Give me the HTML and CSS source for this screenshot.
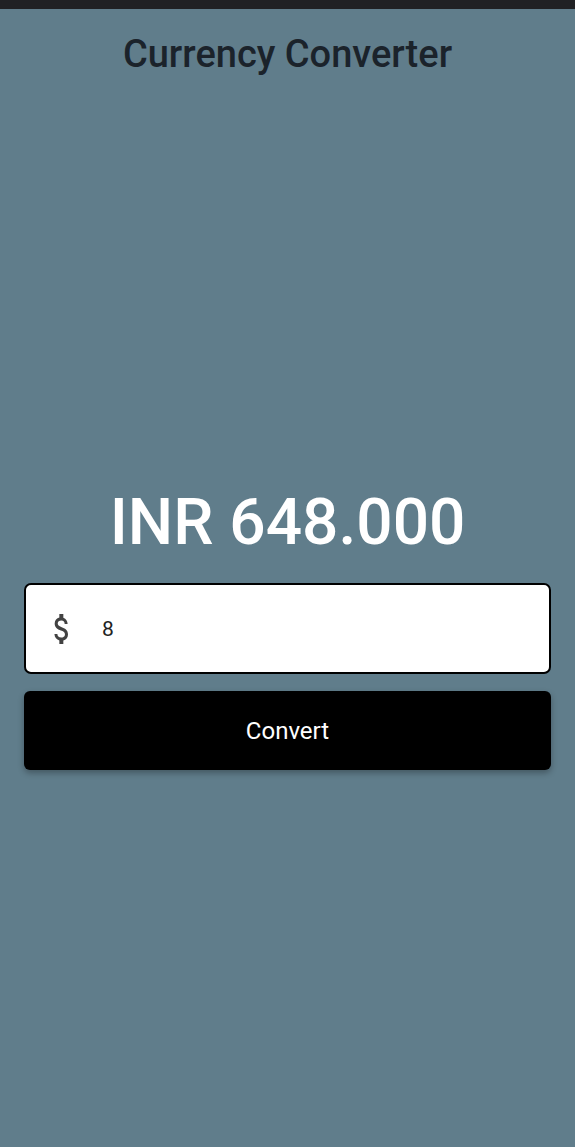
FILE: index.html
```html
<!DOCTYPE html>
<html>
<head>
<meta charset="utf-8">
<link rel="stylesheet" href="styles.css">
</head>
<body>
<div class="statusbar"></div>
<main class="screen">
  <h1 class="title">Currency Converter</h1>
  <div class="content">
    <div class="result">INR 648.000</div>
    <div class="field">
      <svg class="icon" viewBox="0 0 24 24" width="32" height="40" preserveAspectRatio="none"><path fill="#424242" d="M11.8 10.9c-2.27-.59-3-1.2-3-2.15 0-1.09 1.01-1.85 2.7-1.85 1.78 0 2.44.85 2.5 2.1h2.21c-.07-1.72-1.12-3.3-3.21-3.81V3h-3v2.16c-1.94.42-3.5 1.68-3.5 3.61 0 2.31 1.91 3.46 4.7 4.13 2.5.6 3 1.48 3 2.41 0 .69-.49 1.790-2.7 1.79-2.06 0-2.87-.92-2.98-2.1h-2.2c.12 2.19 1.76 3.42 3.68 3.83V21h3v-2.15c1.95-.37 3.5-1.5 3.5-3.55 0-2.84-2.43-3.81-4.7-4.4z"/></svg>
      <span class="value">8</span>
    </div>
    <button class="convert">Convert</button>
  </div>
</main>
</body>
</html>
```
FILE: styles.css
```css
html, body {
  margin: 0;
  padding: 0;
  height: 100%;
}
body {
  background: #607d8b;
  font-family: Roboto, "Noto Sans", sans-serif;
  display: flex;
  flex-direction: column;
}
.statusbar {
  height: 9px;
  background: #202124;
  flex: none;
}
.screen {
  flex: 1;
  display: flex;
  flex-direction: column;
  padding: 0 24px;
}
.title {
  margin: 25px 0 0;
  text-align: center;
  font-size: 38px;
  font-weight: 500;
  color: #1b232b;
  line-height: 40px;
}
.content {
  margin-top: 411px;
  display: flex;
  flex-direction: column;
}
.result {
  text-align: center;
  color: #fff;
  font-size: 64px;
  font-weight: 500;
  line-height: 76px;
}
.field {
  margin-top: 22px;
  height: 87px;
  background: #fff;
  border: 2px solid #000;
  border-radius: 7px;
  display: flex;
  align-items: center;
  padding-left: 20px;
}
.icon {
  flex: none;
}
.value {
  margin-left: 24px;
  font-size: 21px;
  color: #222;
}
.convert {
  margin-top: 17px;
  height: 79px;
  background: #000;
  color: #fff;
  border: none;
  border-radius: 6px;
  font-family: Roboto, sans-serif;
  font-size: 24px;
  box-shadow: 0 3px 6px rgba(0,0,0,0.3);
}
```
